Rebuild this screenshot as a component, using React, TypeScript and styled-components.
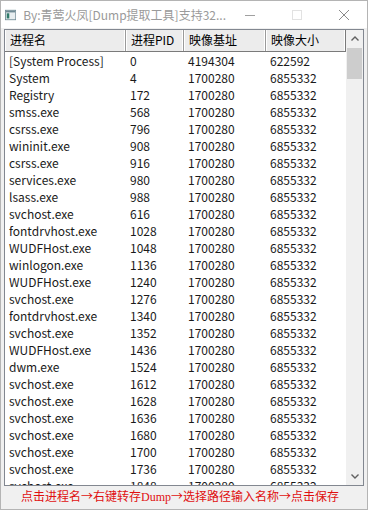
import styled, { createGlobalStyle } from "styled-components";

const GlobalStyle = createGlobalStyle`
  html, body {
    margin: 0;
    padding: 0;
    background: #ffffff;
  }
  body {
    font-family: "Noto Sans CJK SC", "Noto Sans", sans-serif;
  }
`;

const Window = styled.div`
  width: 368px;
  height: 510px;
  box-sizing: border-box;
  border: 1px solid #b4b4b4;
  background: #f0f0f0;
  display: flex;
  flex-direction: column;
  overflow: hidden;
`;

const TitleBar = styled.div`
  height: 27px;
  background: #ffffff;
  display: flex;
  align-items: center;
  flex-shrink: 0;
`;

const AppIcon = styled.svg`
  margin-left: 4px;
  margin-right: 7px;
`;

const Title = styled.div`
  flex: 1;
  font-size: 12px;
  color: #9a9a9a;
  white-space: nowrap;
`;

const Controls = styled.div`
  display: flex;
  height: 100%;
`;

const ControlButton = styled.div`
  width: 47px;
  height: 100%;
  display: flex;
  align-items: center;
  justify-content: center;
`;

const Body = styled.div`
  flex: 1;
  display: flex;
  flex-direction: column;
  padding: 1px 3px 0 3px;
  min-height: 0;
`;

const ListView = styled.div`
  height: 457px;
  box-sizing: border-box;
  border: 1px solid #828790;
  background: #ffffff;
  display: flex;
  overflow: hidden;
  flex-shrink: 0;
`;

const ListMain = styled.div`
  flex: 1;
  display: flex;
  flex-direction: column;
  overflow: hidden;
`;

const HeaderRow = styled.div`
  display: grid;
  grid-template-columns: 121px 58px 82px 79px;
  height: 21px;
  flex-shrink: 0;
  border-bottom: 1px solid #7a7a7a;
  border-right: 1px solid #7a7a7a;
  margin-bottom: 0;
`;

const HeaderCell = styled.div`
  box-sizing: border-box;
  background: #ececec;
  border-right: 1px solid #9a9a9a;
  box-shadow: inset -1px 0 0 #ffffff, inset 1px 0 0 #ffffff;
  font-size: 12px;
  color: #000;
  padding-left: 5px;
  line-height: 20px;
  white-space: nowrap;
  &:last-child {
    border-right: none;
  }
`;

const Row = styled.div`
  display: grid;
  grid-template-columns: 121px 58px 82px 79px;
  height: 17px;
  flex-shrink: 0;
`;

const Cell = styled.div`
  font-size: 12px;
  color: #1a1a1a;
  padding-left: 4px;
  line-height: 17px;
  white-space: nowrap;
  overflow: hidden;
`;

const ScrollBar = styled.div`
  width: 17px;
  background: #f0f0f0;
  display: flex;
  flex-direction: column;
  flex-shrink: 0;
`;

const ArrowButton = styled.div`
  height: 17px;
  display: flex;
  align-items: center;
  justify-content: center;
  flex-shrink: 0;
`;

const Track = styled.div`
  flex: 1;
  position: relative;
`;

const Thumb = styled.div`
  position: absolute;
  left: 1px;
  right: 1px;
  top: 1px;
  height: 31px;
  background: #cdcdcd;
`;

const Hint = styled.div`
  padding: 1px 0 0 17px;
  font-size: 12px;
  line-height: 17px;
  color: #e01010;
  white-space: nowrap;
`;

const Latin = styled.span`
  font-family: "Liberation Serif", serif;
  font-size: 12px;
`;

const rows: [string, string, string, string][] = [
  ["[System Process]", "0", "4194304", "622592"],
  ["System", "4", "1700280", "6855332"],
  ["Registry", "172", "1700280", "6855332"],
  ["smss.exe", "568", "1700280", "6855332"],
  ["csrss.exe", "796", "1700280", "6855332"],
  ["wininit.exe", "908", "1700280", "6855332"],
  ["csrss.exe", "916", "1700280", "6855332"],
  ["services.exe", "980", "1700280", "6855332"],
  ["lsass.exe", "988", "1700280", "6855332"],
  ["svchost.exe", "616", "1700280", "6855332"],
  ["fontdrvhost.exe", "1028", "1700280", "6855332"],
  ["WUDFHost.exe", "1048", "1700280", "6855332"],
  ["winlogon.exe", "1136", "1700280", "6855332"],
  ["WUDFHost.exe", "1240", "1700280", "6855332"],
  ["svchost.exe", "1276", "1700280", "6855332"],
  ["fontdrvhost.exe", "1340", "1700280", "6855332"],
  ["svchost.exe", "1352", "1700280", "6855332"],
  ["WUDFHost.exe", "1436", "1700280", "6855332"],
  ["dwm.exe", "1524", "1700280", "6855332"],
  ["svchost.exe", "1612", "1700280", "6855332"],
  ["svchost.exe", "1628", "1700280", "6855332"],
  ["svchost.exe", "1636", "1700280", "6855332"],
  ["svchost.exe", "1680", "1700280", "6855332"],
  ["svchost.exe", "1700", "1700280", "6855332"],
  ["svchost.exe", "1736", "1700280", "6855332"],
  ["svchost.exe", "1848", "1700280", "6855332"],
];

const headers = ["进程名", "进程PID", "映像基址", "映像大小"];

const App = () => {
  return (
    <>
      <GlobalStyle />
      <Window>
        <TitleBar>
          <AppIcon width="13" height="12" viewBox="0 0 13 12">
            <rect x="0.5" y="0.5" width="12" height="11" fill="#e8eef0" stroke="#6f8a94" />
            <rect x="1" y="1" width="11" height="2" fill="#6f8a94" />
            <rect x="2" y="4" width="3" height="6" fill="#2f7a6a" />
          </AppIcon>
          <Title>By:青莺火凤[Dump提取工具]支持32...</Title>
          <Controls>
            <ControlButton>
              <svg width="10" height="10" viewBox="0 0 10 10">
                <line x1="0" y1="5.5" x2="10" y2="5.5" stroke="#a0a0a0" strokeWidth="1" />
              </svg>
            </ControlButton>
            <ControlButton>
              <svg width="10" height="10" viewBox="0 0 10 10">
                <rect x="0.5" y="0.5" width="9" height="9" fill="none" stroke="#e2e2e2" strokeWidth="1" />
              </svg>
            </ControlButton>
            <ControlButton>
              <svg width="10" height="10" viewBox="0 0 10 10">
                <path d="M0 0 L10 10 M10 0 L0 10" stroke="#8a8a8a" strokeWidth="1" />
              </svg>
            </ControlButton>
          </Controls>
        </TitleBar>
        <Body>
          <ListView>
            <ListMain>
              <HeaderRow>
                {headers.map((h) => (
                  <HeaderCell key={h}>{h}</HeaderCell>
                ))}
              </HeaderRow>
              {rows.map((r, i) => (
                <Row key={i}>
                  {r.map((c, j) => (
                    <Cell key={j}>{c}</Cell>
                  ))}
                </Row>
              ))}
            </ListMain>
            <ScrollBar>
              <ArrowButton>
                <svg width="8" height="5" viewBox="0 0 8 5">
                  <path d="M0.5 4.5 L4 1 L7.5 4.5" fill="none" stroke="#606060" strokeWidth="1.4" />
                </svg>
              </ArrowButton>
              <Track>
                <Thumb />
              </Track>
              <ArrowButton>
                <svg width="8" height="5" viewBox="0 0 8 5">
                  <path d="M0.5 0.5 L4 4 L7.5 0.5" fill="none" stroke="#606060" strokeWidth="1.4" />
                </svg>
              </ArrowButton>
            </ScrollBar>
          </ListView>
          <Hint>
            点击进程名→右键转存<Latin>Dump</Latin>→选择路径输入名称→点击保存
          </Hint>
        </Body>
      </Window>
    </>
  );
};

export default App;
